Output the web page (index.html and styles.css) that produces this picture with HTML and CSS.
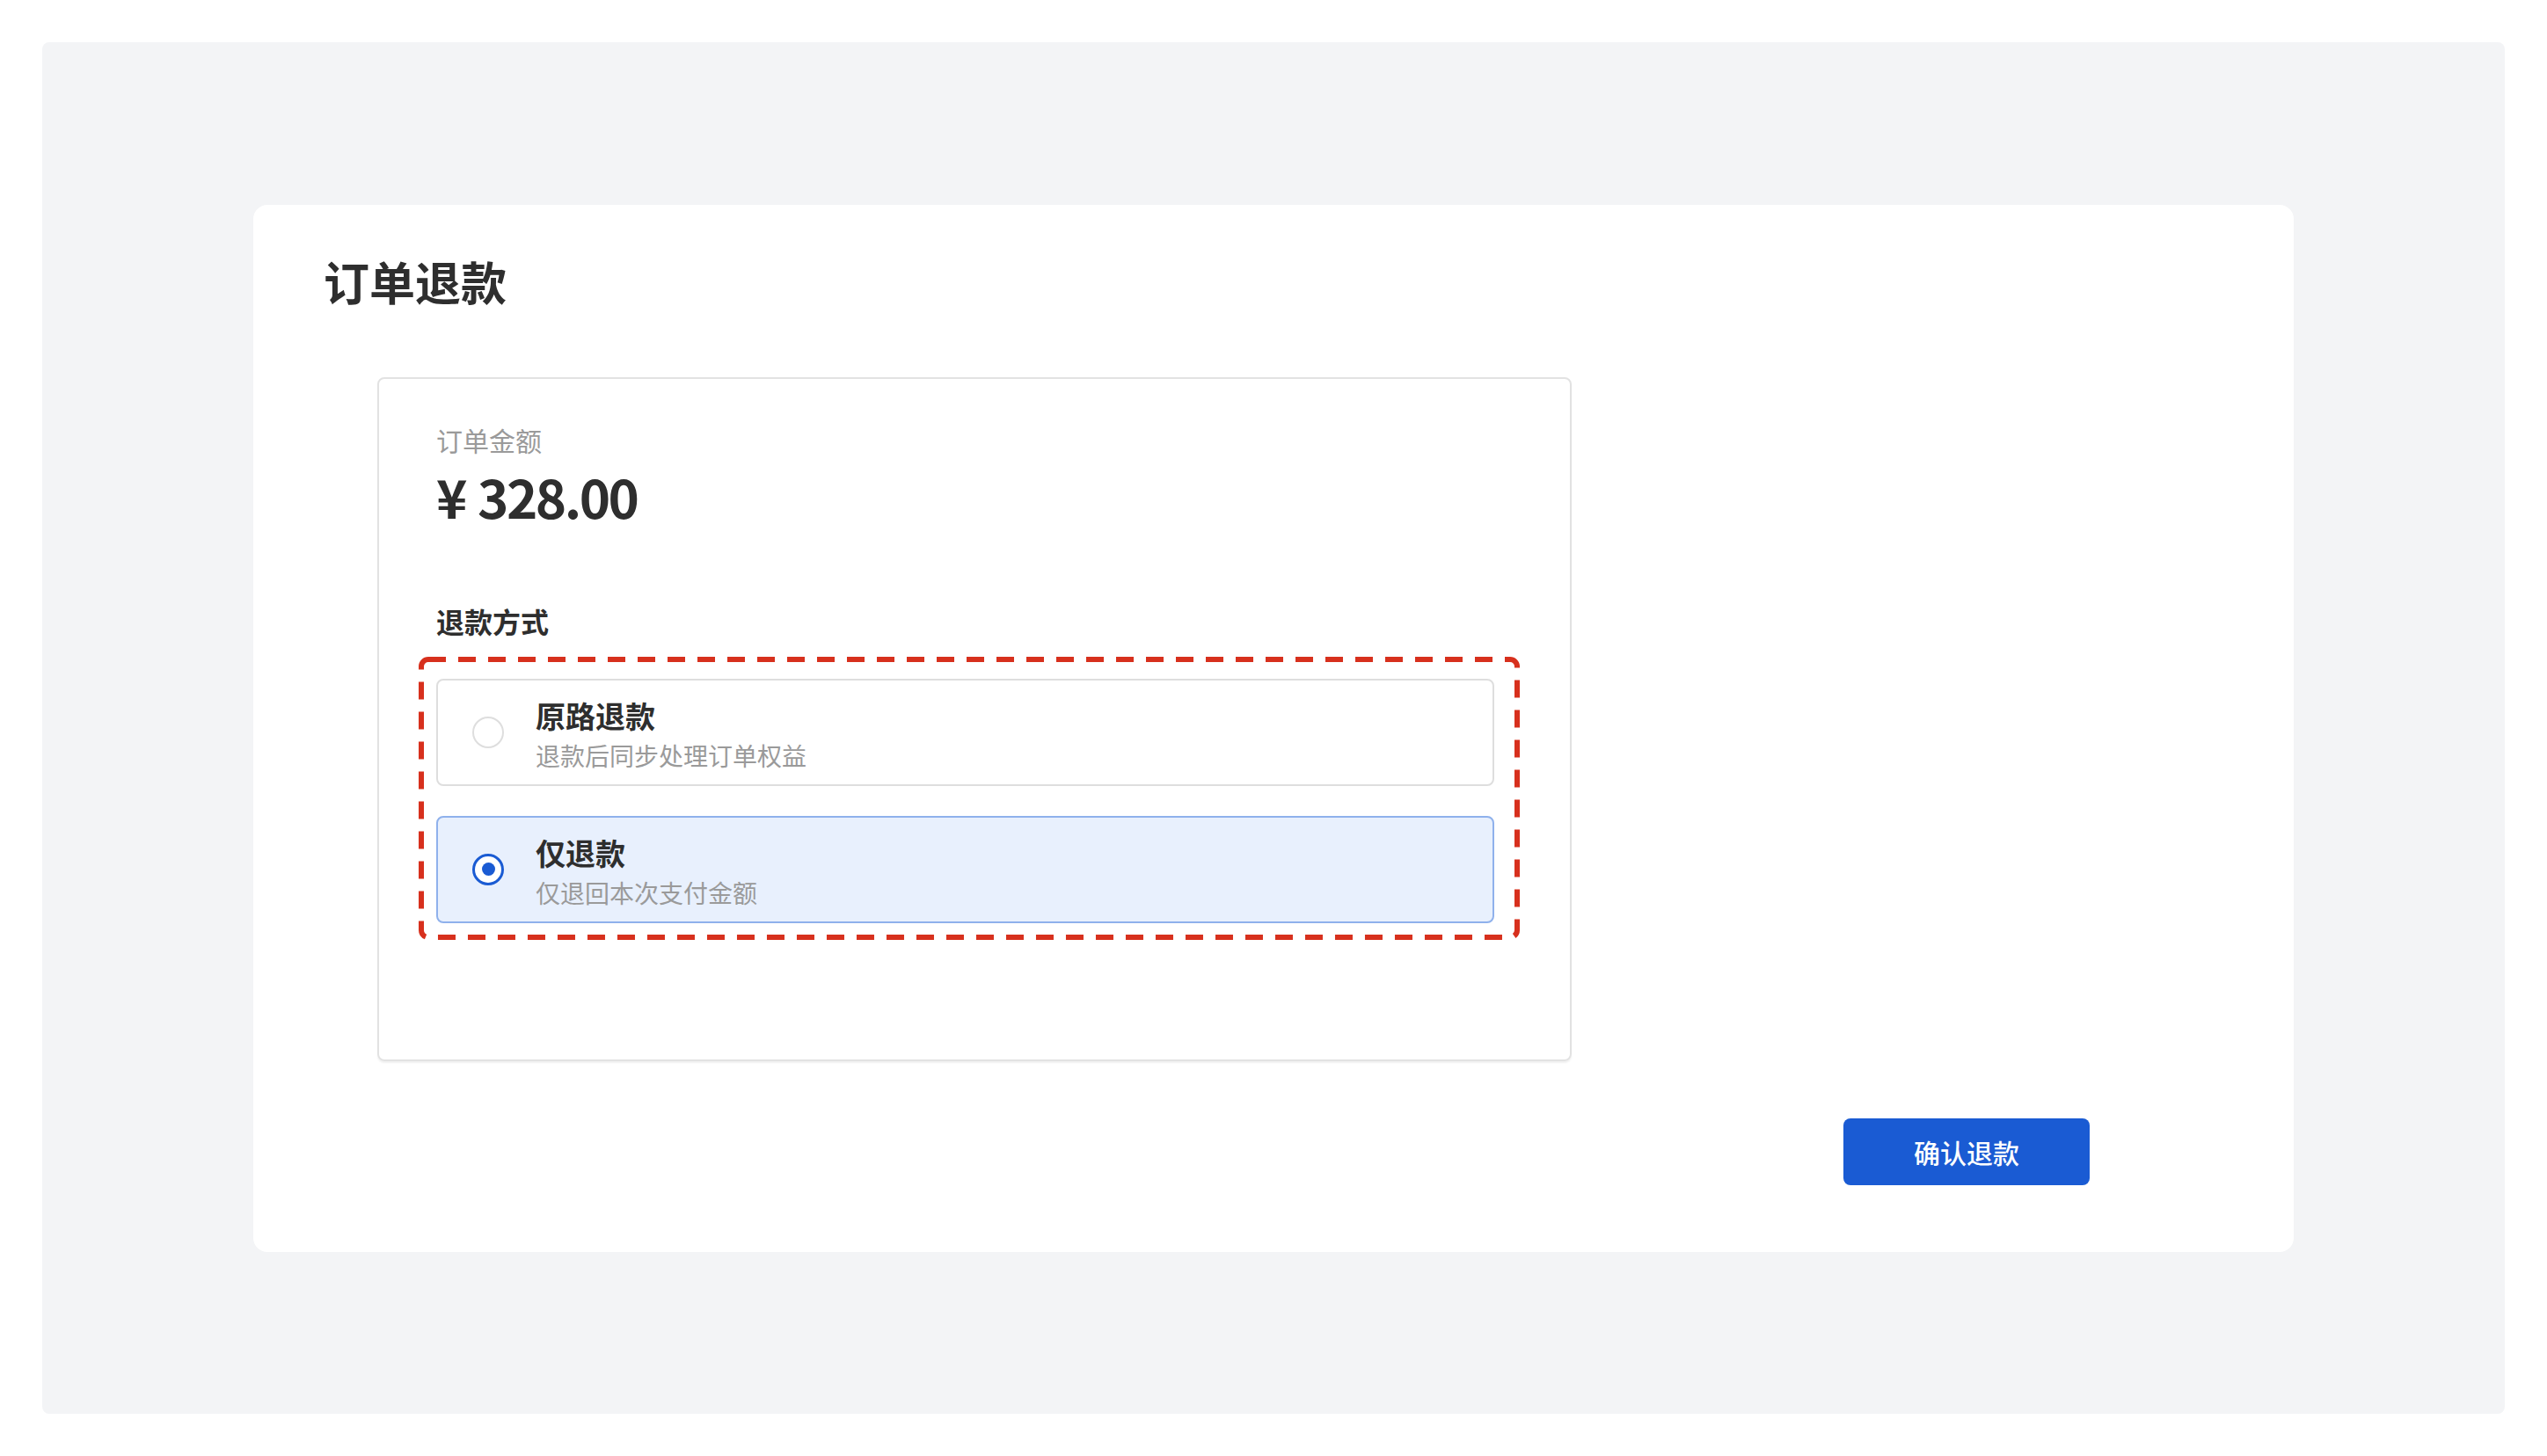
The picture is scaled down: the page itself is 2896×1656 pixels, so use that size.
FILE: index.html
```html
<!DOCTYPE html>
<html lang="zh-CN">

<head>
    <meta charset="UTF-8">
    <meta name="viewport" content="width=device-width, initial-scale=1.0">
    <title>订单退款</title>
    <link rel="stylesheet" href="styles.css">
</head>

<body>
    <div class="page">
        <div class="card">
            <h1 class="card-title">订单退款</h1>

            <div class="refund-box">
                <div class="amount-label">订单金额</div>
                <div class="amount">¥ 328.00</div>

                <div class="section-label">退款方式</div>
                <div class="options">
                    <label class="option">
                        <span class="radio"></span>
                        <span class="option-text">
                            <span class="option-name">原路退款</span>
                            <span class="option-desc">退款后同步处理订单权益</span>
                        </span>
                    </label>
                    <label class="option selected">
                        <span class="radio"></span>
                        <span class="option-text">
                            <span class="option-name">仅退款</span>
                            <span class="option-desc">仅退回本次支付金额</span>
                        </span>
                    </label>
                    <!-- red dashed frame around the refund choices -->
                    <svg class="mark-frame" aria-hidden="true">
                        <rect width="100%" height="100%" rx="8" ry="8"></rect>
                    </svg>
                </div>
            </div>

            <div class="card-footer">
                <button class="btn-primary">确认退款</button>
            </div>
        </div>
    </div>
</body>

</html>
```

FILE: styles.css
```css
:root {
    --page-bg: #f3f4f6;
    --text-main: #2e2e2e;
    --text-muted: #9a9a9a;
    --line: #dedede;
    --blue: #1a5bd3;
    --blue-soft: #e8f0fd;
    --blue-line: #8fb1ec;
    --mark-red: #d7301d;
}

* {
    box-sizing: border-box;
}

body {
    margin: 0;
    padding: 48px;
    font-family: "Noto Sans CJK SC", "Noto Sans", sans-serif;
    color: var(--text-main);
    background: #fff;
}

.page {
    height: calc(100vh - 96px);
    padding: 0 240px;
    display: flex;
    align-items: center;
    background: var(--page-bg);
    border-radius: 8px;
}

.card {
    flex: 1;
    padding: 51px 80px 76px;
    background: #fff;
    border-radius: 16px;
}

.card-title {
    margin: 0 0 73px;
    font-size: 52px;
    line-height: 72px;
    font-weight: 700;
}

.refund-box {
    width: 1358px;
    margin-left: 61px;
    padding: 49px 86px 155px 65px;
    border: 2px solid #e2e2e2;
    border-radius: 8px;
    box-shadow: 0 2px 2px rgba(0, 0, 0, 0.06);
}

.amount-label {
    font-size: 30px;
    line-height: 40px;
    color: var(--text-muted);
}

.amount {
    margin-top: 4px;
    font-size: 60px;
    line-height: 80px;
    font-weight: 700;
    letter-spacing: -2.5px;
    word-spacing: 3px;
}

.section-label {
    margin-top: 80px;
    font-size: 32px;
    line-height: 44px;
    font-weight: 700;
}

.options {
    position: relative;
    margin-top: 44px;
    display: flex;
    flex-direction: column;
    gap: 34px;
}

.mark-frame {
    position: absolute;
    top: -22px;
    left: -17px;
    width: calc(100% + 43px);
    height: calc(100% + 38px);
    overflow: visible;
    pointer-events: none;
}

.mark-frame rect {
    fill: none;
    stroke: var(--mark-red);
    stroke-width: 6;
    stroke-dasharray: 20 14;
}

.option {
    height: 122px;
    padding: 0 0 0 39px;
    display: flex;
    align-items: center;
    gap: 36px;
    border: 2px solid var(--line);
    border-radius: 8px;
    background: #fff;
    cursor: pointer;
}

.option.selected {
    background: var(--blue-soft);
    border-color: var(--blue-line);
}

.radio {
    flex: none;
    width: 36px;
    height: 36px;
    border: 2px solid var(--line);
    border-radius: 50%;
    background: #fff;
    display: flex;
    align-items: center;
    justify-content: center;
}

.option.selected .radio {
    border: 3px solid var(--blue);
}

.option.selected .radio::before {
    content: "";
    width: 15px;
    height: 15px;
    border-radius: 50%;
    background: var(--blue);
}

.option-text {
    display: flex;
    flex-direction: column;
    padding-top: 5px;
}

.option-name {
    font-size: 34px;
    line-height: 44px;
    font-weight: 700;
}

.option-desc {
    margin-top: 4px;
    font-size: 28px;
    line-height: 38px;
    color: var(--text-muted);
}

.card-footer {
    margin-top: 65px;
    padding-right: 152px;
    display: flex;
    justify-content: flex-end;
}

.btn-primary {
    width: 280px;
    height: 76px;
    border: none;
    border-radius: 8px;
    background: var(--blue);
    color: #fff;
    font-family: inherit;
    font-size: 30px;
    font-weight: 500;
    cursor: pointer;
}
```
